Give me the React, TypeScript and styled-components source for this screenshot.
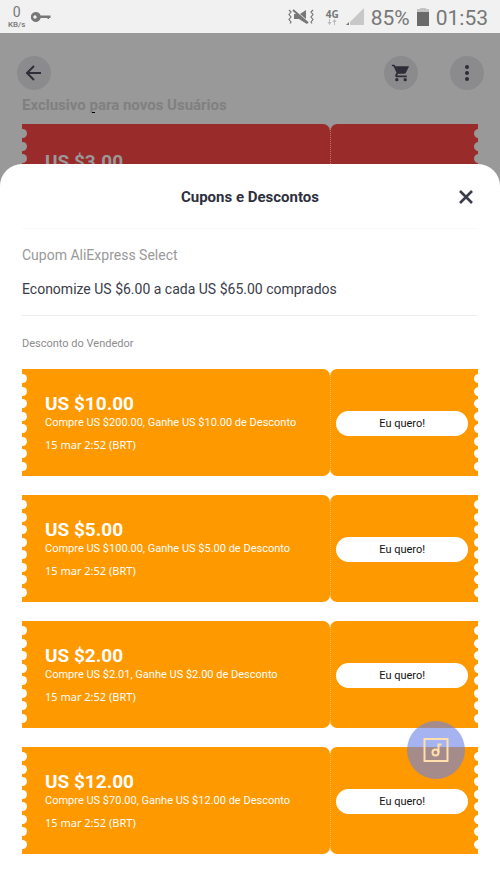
import React from "react";
import styled, { createGlobalStyle } from "styled-components";

const GlobalStyle = createGlobalStyle`
  * { box-sizing: border-box; }
  body {
    margin: 0;
    background: #fff;
    font-family: Roboto, "Liberation Sans", sans-serif;
    color: #2e3040;
  }
  button { font: inherit; border: 0; padding: 0; cursor: pointer; }
  h1, h2, p { margin: 0; }
`;

const Page = styled.div`
  min-height: 100vh;
  display: flex;
  flex-direction: column;
`;

const StatusBar = styled.div`
  height: 33px;
  padding: 0 12px 0 8px;
  display: flex;
  align-items: center;
  justify-content: space-between;
  background: #f1f1f1;
  color: #777;
`;

const StatusGroup = styled.div<{ $gap: number }>`
  display: flex;
  align-items: center;
  gap: ${(p) => p.$gap}px;
`;

const NetSpeed = styled.div`
  display: flex;
  flex-direction: column;
  align-items: center;
  font-size: 8px;
  line-height: 10px;
  font-weight: 500;
`;

const NetValue = styled.span`
  font-size: 14px;
  line-height: 16px;
  font-weight: 400;
`;

const NetworkType = styled.span`
  display: flex;
  flex-direction: column;
  align-items: center;
  margin-left: 5px;
  font-family: "Open Sans", sans-serif;
  font-size: 10px;
  line-height: 10px;
  font-weight: 700;
`;

const StatusText = styled.span`
  font-size: 21px;
  line-height: 30px;
  padding-top: 3px;
`;

const Underlay = styled.div`
  height: 157px;
  overflow: hidden;
  padding: 23px 22px 0;
  background: #999;
`;

const NavBar = styled.nav`
  display: flex;
  align-items: center;
  gap: 32px;
  margin: 0 -6px 0 -5px;
`;

const RoundButton = styled.button`
  width: 34px;
  height: 34px;
  border-radius: 50%;
  background: #8b8b8d;
  color: #2e2e38;
  display: grid;
  place-items: center;
  &:first-child { margin-right: auto; }
`;

const UnderlayTitle = styled.h2`
  margin: 5px 0 9px;
  font-size: 15px;
  line-height: 20px;
  font-weight: 700;
  color: #808080;
`;

const Sheet = styled.main`
  position: relative;
  flex: 1;
  margin-top: -26px;
  padding: 0 22px 36px;
  border-radius: 22px 22px 0 0;
  background: #fff;
`;

const SheetHeader = styled.header`
  display: grid;
  grid-template-columns: 24px 1fr 24px;
  align-items: center;
  height: 65px;
  padding-top: 2px;
  border-bottom: 1px solid #fafafa;
`;

const SheetTitle = styled.h1`
  grid-column: 2;
  text-align: center;
  font-size: 15px;
  line-height: 24px;
  font-weight: 700;
`;

const CloseButton = styled.button`
  height: 24px;
  background: none;
  color: #3a3c4a;
  display: grid;
  place-items: center;
`;

const Summary = styled.section`
  padding: 16px 0;
  border-bottom: 1px solid #eee;
`;

const SummaryLabel = styled.h2`
  font-size: 14px;
  line-height: 20px;
  font-weight: 400;
  color: #999;
`;

const SummaryText = styled.p`
  margin-top: 14px;
  font-size: 14px;
  line-height: 20px;
  color: #3a3c4a;
`;

const SectionLabel = styled.h2`
  padding: 19px 0 17px;
  font-size: 11px;
  line-height: 17px;
  font-weight: 400;
  color: #8c8c8c;
`;

const CouponList = styled.div`
  display: flex;
  flex-direction: column;
  gap: 19px;
`;

const CouponCard = styled.article`
  display: flex;
  height: 107px;
`;

const CouponBody = styled.div<{ $color: string }>`
  flex: 309;
  display: flex;
  background: ${(p) => p.$color};
  border-radius: 0 7px 7px 0;
`;

const CouponStub = styled.div<{ $color: string }>`
  flex: 147;
  display: flex;
  align-items: center;
  justify-content: flex-end;
  background: ${(p) => p.$color};
  border-left: 1px dotted rgba(255, 255, 255, 0.35);
  border-radius: 7px 0 0 7px;
`;

const Perforation = styled.div`
  width: 5px;
  height: 107px;
  padding: 5px 0;
  overflow: hidden;
  display: flex;
  flex-direction: column;
  justify-content: space-between;
`;

const Hole = styled.i<{ $color: string; $side: "left" | "right" }>`
  width: 9px;
  height: 9px;
  border-radius: 50%;
  background: ${(p) => p.$color};
  margin-left: ${(p) => (p.$side === "left" ? "-4px" : "1px")};
`;

const CouponText = styled.div<{ $top: number }>`
  padding: ${(p) => p.$top}px 0 0 18px;
`;

const Amount = styled.h2<{ $color: string }>`
  font-size: 19px;
  line-height: 23px;
  font-weight: 700;
  color: ${(p) => p.$color};
`;

const Condition = styled.p`
  font-size: 11px;
  line-height: 16px;
  color: #fff;
`;

const Expiry = styled.p`
  margin-top: 5px;
  font-family: "Noto Sans", sans-serif;
  font-size: 11px;
  line-height: 17px;
  color: #fff;
`;

const ClaimButton = styled.button`
  flex: 1;
  height: 25px;
  margin: 2px 5px 0;
  border-radius: 13px;
  background: #fff;
  color: #111;
  font-size: 11px;
  line-height: 25px;
`;

const MusicButton = styled.button`
  position: fixed;
  right: 35px;
  bottom: 110px;
  width: 58px;
  height: 58px;
  border-radius: 50%;
  background: rgba(105, 130, 230, 0.6);
  display: grid;
  place-items: center;
`;

const Speck = styled.i`
  position: absolute;
  left: 92px;
  top: 112px;
  width: 3px;
  height: 1px;
  background: #000;
`;

function Holes({ color, side }: { color: string; side: "left" | "right" }) {
  return (
    <Perforation>
      {Array.from({ length: 8 }, (_, i) => (
        <Hole key={i} $color={color} $side={side} />
      ))}
    </Perforation>
  );
}

interface CouponProps {
  amount: string;
  condition?: string;
  expiry?: string;
  dimmed?: boolean;
}

function Coupon({ amount, condition, expiry, dimmed = false }: CouponProps) {
  const fill = dimmed ? "#992b2b" : "#ff9900";
  const hole = dimmed ? "#999" : "#fff";
  return (
    <CouponCard>
      <CouponBody $color={fill}>
        <Holes color={hole} side="left" />
        <CouponText $top={dimmed ? 26 : 23}>
          <Amount $color={hole}>{amount}</Amount>
          {condition && <Condition>{condition}</Condition>}
          {expiry && <Expiry>{expiry}</Expiry>}
        </CouponText>
      </CouponBody>
      <CouponStub $color={fill}>
        {!dimmed && <ClaimButton type="button">Eu quero!</ClaimButton>}
        <Holes color={hole} side="right" />
      </CouponStub>
    </CouponCard>
  );
}

const KeyIcon = () => (
  <svg width="20" height="12" viewBox="0 0 20 12">
    <path
      fillRule="evenodd"
      fill="#777"
      d="M5 1a5 5 0 0 1 4.600 3.500H19.500v2.500H18v1h-1.500V7H9.700A5 5 0 1 1 5 1zM4 4.300a1.700 1.700 0 1 0 .01 0z"
    />
  </svg>
);

const MuteIcon = () => (
  <svg width="26" height="18" viewBox="0 0 26 18" fill="none">
    <path
      d="M1 2l2 2-2 2.500 2 2.500-2 2.500 2 2.500-1 1.500M25 2l-2 2 2 2.500-2 2.500 2 2.500-2 2.500 1 1.500"
      stroke="#777"
      strokeWidth="1.200"
    />
    <path d="M12 6l6-4v9zM6 6h3l10 8v2l-5-3-3-2H6z" fill="#777" />
    <path d="M5 2l15 13" stroke="#777" strokeWidth="2" />
  </svg>
);

const coupons = [
  { amount: "US $10.00", condition: "Compre US $200.00, Ganhe US $10.00 de Desconto" },
  { amount: "US $5.00", condition: "Compre US $100.00, Ganhe US $5.00 de Desconto" },
  { amount: "US $2.00", condition: "Compre US $2.01, Ganhe US $2.00 de Desconto" },
  { amount: "US $12.00", condition: "Compre US $70.00, Ganhe US $12.00 de Desconto" },
];

export default function App() {
  return (
    <Page>
      <GlobalStyle />
      <StatusBar>
        <StatusGroup $gap={6}>
          <NetSpeed>
            <NetValue>0</NetValue>
            KB/s
          </NetSpeed>
          <KeyIcon />
        </StatusGroup>
        <StatusGroup $gap={7}>
          <MuteIcon />
          <NetworkType>
            4G
            <svg width="10" height="6" viewBox="0 0 10 6" fill="#bbb">
              <path d="M2 0h1v3h1.500L2.500 6 .5 3H2zM7 6h1V3h1.500L7.500 0l-2 3H7z" />
            </svg>
          </NetworkType>
          <svg width="18" height="17" viewBox="0 0 18 17">
            <path d="M18 0v17H4v-3z" fill="#c8c8c8" />
            <path d="M3 14v3H0z" fill="#777" />
          </svg>
          <StatusText>85%</StatusText>
          <svg width="12" height="18" viewBox="0 0 12 18">
            <path d="M3 0h6v1h3v3H0V1h3z" fill="#c4c4c4" />
            <path d="M0 4h12v14H0z" fill="#6a6a6a" />
          </svg>
          <StatusText>01:53</StatusText>
        </StatusGroup>
      </StatusBar>
      <Underlay>
        <NavBar>
          <RoundButton type="button" aria-label="Voltar">
            <svg width="18" height="18" viewBox="0 0 18 18" fill="none" stroke="currentColor" strokeWidth="2">
              <path d="M9 2L2 9l7 7M2 9h14" />
            </svg>
          </RoundButton>
          <RoundButton type="button" aria-label="Carrinho">
            <svg width="20" height="20" viewBox="0 0 24 24" fill="currentColor">
              <path d="M7 18a2 2 0 1 0 0 4 2 2 0 0 0 0-4zM1 2v2h2l3.600 7.590-1.350 2.450C4.520 15.370 5.480 17 7 17h12v-2H7.420l1-2h7.530c.75 0 1.410-.41 1.750-1.030L21.700 4H5.210l-.94-2zM17 18a2 2 0 1 0 0 4 2 2 0 0 0 0-4z" />
            </svg>
          </RoundButton>
          <RoundButton type="button" aria-label="Mais opções">
            <svg width="6" height="18" viewBox="0 0 6 18" fill="currentColor">
              <circle cx="3" cy="3" r="2" />
              <circle cx="3" cy="9" r="2" />
              <circle cx="3" cy="15" r="2" />
            </svg>
          </RoundButton>
        </NavBar>
        <UnderlayTitle>Exclusivo para novos Usuários</UnderlayTitle>
        <Speck />
        <Coupon amount="US $3.00" dimmed />
      </Underlay>
      <Sheet>
        <SheetHeader>
          <SheetTitle>Cupons e Descontos</SheetTitle>
          <CloseButton type="button" aria-label="Fechar">
            <svg width="14" height="14" viewBox="0 0 14 14" fill="none" stroke="currentColor" strokeWidth="2.600">
              <path d="M1 1l12 12M13 1L1 13" />
            </svg>
          </CloseButton>
        </SheetHeader>
        <Summary>
          <SummaryLabel>Cupom AliExpress Select</SummaryLabel>
          <SummaryText>Economize US $6.00 a cada US $65.00 comprados</SummaryText>
        </Summary>
        <SectionLabel>Desconto do Vendedor</SectionLabel>
        <CouponList>
          {coupons.map((c) => (
            <Coupon key={c.amount} {...c} expiry="15 mar 2:52 (BRT)" />
          ))}
        </CouponList>
      </Sheet>
      <MusicButton type="button" aria-label="Música">
        <svg width="26" height="26" viewBox="0 0 26 26" fill="none" stroke="#ffdfae" strokeWidth="2">
          <path d="M1.500 2h23v22h-23z" />
          <circle cx="12.500" cy="15.500" r="3" />
          <path d="M15.500 15.500V7.500h3" />
        </svg>
      </MusicButton>
    </Page>
  );
}
